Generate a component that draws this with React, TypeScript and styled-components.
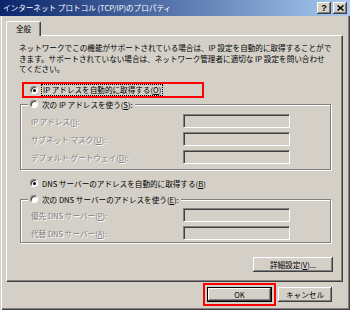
import React from "react";
import styled, { createGlobalStyle } from "styled-components";

const face = "#d4d0c8";

const GlobalStyle = createGlobalStyle`
  html, body {
    margin: 0;
    padding: 0;
    background: ${face};
  }
  body {
    font-family: "Noto Sans CJK JP", "Liberation Sans", sans-serif;
    font-size: 7.6px;
    color: #000;
  }
  * {
    box-sizing: border-box;
  }
`;

const Window = styled.div`
  width: 350px;
  height: 310px;
  display: flex;
  flex-direction: column;
  background: ${face};
`;

const TitleBar = styled.div`
  height: 16px;
  display: flex;
  align-items: center;
  padding: 0 3px;
  background: linear-gradient(to right, #0a246a, #a6caf0);
  color: #fff;
`;

const TitleText = styled.span`
  flex: 1;
  white-space: nowrap;
  line-height: 16px;
`;

const TitleButtons = styled.div`
  display: flex;
  gap: 2px;
`;

const TitleButton = styled.div`
  width: 14px;
  height: 12px;
  display: flex;
  align-items: center;
  justify-content: center;
  background: ${face};
  color: #000;
  font-family: "Liberation Sans", sans-serif;
  font-weight: 700;
  font-size: 9px;
  box-shadow: inset -1px -1px 0 #404040, inset 1px 1px 0 #fff,
    inset -2px -2px 0 #808080;
`;

const Body = styled.div`
  flex: 1;
  display: flex;
  flex-direction: column;
  padding: 5px 7px 0 6px;
  box-shadow: inset 1px 0 0 ${face}, inset 2px 0 0 #fff,
    inset -1px -1px 0 #404040, inset -2px -2px 0 #808080;
`;

const TabStrip = styled.div`
  display: flex;
`;

const Tab = styled.div`
  position: relative;
  z-index: 1;
  width: 35px;
  height: 15px;
  margin-bottom: -1px;
  display: flex;
  align-items: center;
  justify-content: center;
  padding-bottom: 1px;
  background: ${face};
  border-top: 1px solid #fff;
  border-left: 1px solid #fff;
  border-right: 1px solid #404040;
  border-radius: 2px 2px 0 0;
  box-shadow: inset -1px 0 0 #808080;
`;

const Panel = styled.div`
  display: flex;
  flex-direction: column;
  padding: 7px 9px 9px 13px;
  border-top: 1px solid #fff;
  border-left: 1px solid #fff;
  border-right: 1px solid #404040;
  border-bottom: 1px solid #404040;
  box-shadow: inset -1px -1px 0 #808080;
`;

const Description = styled.p`
  margin: 0 0 0 -1px;
  line-height: 10.5px;
  white-space: nowrap;
`;

const RadioRow = styled.div`
  display: flex;
  align-items: center;
  gap: 4px;
  height: 12px;
  padding-left: 10px;
  margin-top: 7px;
  white-space: nowrap;
`;

const MarkedRow = styled.div`
  display: flex;
  align-items: center;
  gap: 4px;
  width: 182px;
  height: 16px;
  margin: 7.5px 0 0 2px;
  padding-left: 6px;
  border: 2px solid #ff0000;
  white-space: nowrap;
`;

const FocusText = styled.span`
  outline: 1px dotted #000;
  line-height: 10px;
  padding: 0 1px;
`;

const RadioCircle = styled.span<{ $checked?: boolean }>`
  flex: none;
  width: 8px;
  height: 8px;
  border-radius: 50%;
  display: flex;
  align-items: center;
  justify-content: center;
  background: #fff;
  border: 1px solid;
  border-color: #808080 #fff #fff #808080;
  box-shadow: inset 1px 1px 0 #404040;

  &::after {
    content: "";
    width: 3px;
    height: 3px;
    border-radius: 50%;
    background: ${(p) => (p.$checked ? "#000" : "transparent")};
  }
`;

const Group = styled.fieldset<{ $top: number; $padTop: number; $padBottom: number }>`
  margin: ${(p) => p.$top}px 2px 0 0;
  min-width: 0;
  padding: ${(p) => p.$padTop}px 10px ${(p) => p.$padBottom}px 10px;
  border: 1px solid #808080;
  box-shadow: inset 1px 1px 0 #fff, 1px 1px 0 #fff;
`;

const Legend = styled.legend`
  display: flex;
  align-items: center;
  gap: 4px;
  height: 12px;
  margin-left: -3px;
  padding: 0 2px;
  background: ${face};
  white-space: nowrap;
`;

const Fields = styled.div`
  display: grid;
  grid-template-columns: 152px 107px;
  row-gap: 4px;
  align-items: center;
`;

const FieldLabel = styled.span`
  color: #808080;
  text-shadow: 1px 1px 0 #fff;
  white-space: nowrap;
`;

const FieldBox = styled.div`
  height: 14px;
  background: ${face};
  border: 1px solid;
  border-color: #808080 #fff #fff #808080;
  box-shadow: inset 1px 1px 0 #404040;
`;

const ButtonRow = styled.div<{ $top: number }>`
  display: flex;
  justify-content: flex-end;
  gap: 6px;
  margin-top: ${(p) => p.$top}px;
`;

const Button = styled.div<{ $width: number; $default?: boolean; $marked?: boolean }>`
  width: ${(p) => p.$width}px;
  height: 15px;
  display: flex;
  align-items: center;
  justify-content: center;
  background: ${face};
  white-space: nowrap;
  border: ${(p) => (p.$default ? "1px solid #000" : "none")};
  box-shadow: inset -1px -1px 0 #404040, inset 1px 1px 0 #fff,
    inset -2px -2px 0 #808080;
  ${(p) => (p.$marked ? "outline: 2px solid #ff0000; outline-offset: 2px;" : "")}
`;

const Footer = styled.div`
  display: flex;
  justify-content: flex-end;
  gap: 6px;
  padding: 5px 11px 0 0;
`;

const Accel = styled.u`
  text-decoration-thickness: 1px;
  text-underline-offset: 1px;
`;

const CloseIcon = () => (
  <svg width="7" height="6" viewBox="0 0 7 6">
    <path d="M0.5 0.5 L6.5 5.5 M6.5 0.5 L0.5 5.5" stroke="#000" strokeWidth="1.5" />
  </svg>
);

const ipFields = [
  ["IP アドレス(", "I", "):"],
  ["サブネット マスク(", "U", "):"],
  ["デフォルト ゲートウェイ(", "D", "):"],
];

const dnsFields = [
  ["優先 DNS サーバー(", "P", "):"],
  ["代替 DNS サーバー(", "A", "):"],
];

const FieldRows: React.FC<{ rows: string[][] }> = ({ rows }) => (
  <Fields>
    {rows.map(([before, key, after]) => (
      <React.Fragment key={key}>
        <FieldLabel>
          {before}
          <Accel>{key}</Accel>
          {after}
        </FieldLabel>
        <FieldBox />
      </React.Fragment>
    ))}
  </Fields>
);

export default function App() {
  return (
    <Window>
      <GlobalStyle />
      <TitleBar>
        <TitleText>インターネット プロトコル (TCP/IP)のプロパティ</TitleText>
        <TitleButtons>
          <TitleButton>?</TitleButton>
          <TitleButton>
            <CloseIcon />
          </TitleButton>
        </TitleButtons>
      </TitleBar>
      <Body>
        <TabStrip>
          <Tab>全般</Tab>
        </TabStrip>
        <Panel>
          <Description>
            ネットワークでこの機能がサポートされている場合は、IP 設定を自動的に取得することがで
            <br />
            きます。サポートされていない場合は、ネットワーク管理者に適切な IP 設定を問い合わせ
            <br />
            てください。
          </Description>
          <MarkedRow>
            <RadioCircle $checked />
            <FocusText>
              IP アドレスを自動的に取得する(<Accel>O</Accel>)
            </FocusText>
          </MarkedRow>
          <Group $top={0} $padTop={4} $padBottom={5}>
            <Legend>
              <RadioCircle />
              <span>
                次の IP アドレスを使う(<Accel>S</Accel>):
              </span>
            </Legend>
            <FieldRows rows={ipFields} />
          </Group>
          <RadioRow>
            <RadioCircle $checked />
            <span>
              DNS サーバーのアドレスを自動的に取得する(<Accel>B</Accel>)
            </span>
          </RadioRow>
          <Group $top={4} $padTop={3} $padBottom={2}>
            <Legend>
              <RadioCircle />
              <span>
                次の DNS サーバーのアドレスを使う(<Accel>E</Accel>):
              </span>
            </Legend>
            <FieldRows rows={dnsFields} />
          </Group>
          <ButtonRow $top={14}>
            <Button $width={80}>
              詳細設定(<Accel>V</Accel>)...
            </Button>
          </ButtonRow>
        </Panel>
        <Footer>
          <Button $width={65} $default $marked>
            OK
          </Button>
          <Button $width={54}>キャンセル</Button>
        </Footer>
      </Body>
    </Window>
  );
}
